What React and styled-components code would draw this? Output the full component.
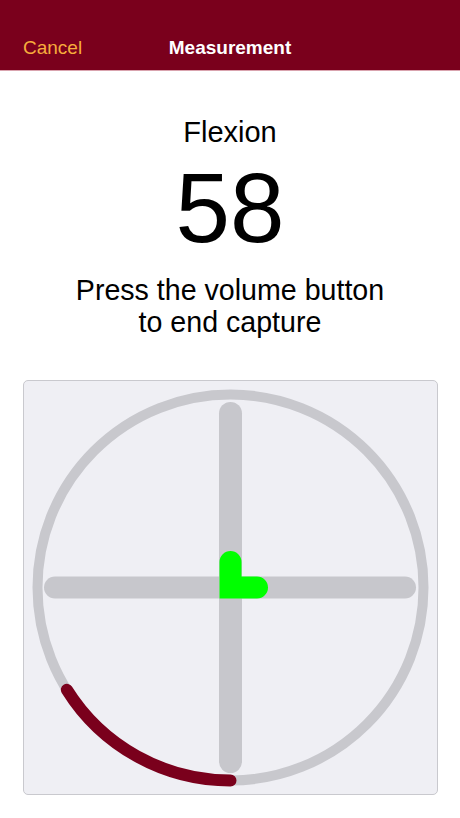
import React from 'react'
import styled, { createGlobalStyle } from 'styled-components'

const GlobalStyle = createGlobalStyle`
  html, body {
    margin: 0;
    padding: 0;
    background: #ffffff;
    font-family: "Liberation Sans", Arial, sans-serif;
  }
`

const Page = styled.div`
  width: 460px;
  min-height: 818px;
  display: flex;
  flex-direction: column;
  align-items: center;
  background: #ffffff;
`

const NavBar = styled.div`
  width: 100%;
  box-sizing: border-box;
  height: 71px;
  padding-top: 25px;
  background: #7a001c;
  border-bottom: 1px solid #d9a3ae;
  display: grid;
  grid-template-columns: 1fr auto 1fr;
  align-items: center;
  padding-left: 23px;
  padding-right: 23px;
`

const NavButton = styled.span`
  color: #f7ad3c;
  font-size: 19px;
  justify-self: start;
`

const NavTitle = styled.span`
  color: #ffffff;
  font-size: 19px;
  font-weight: 700;
`

const Label = styled.div`
  margin-top: 44px;
  font-size: 29px;
  line-height: 34px;
  color: #000;
`

const Value = styled.div`
  margin-top: 10px;
  font-size: 98px;
  line-height: 98px;
  color: #000;
`

const Hint = styled.div`
  margin-top: 17px;
  font-size: 28.6px;
  line-height: 32px;
  text-align: center;
  color: #000;
`

const Panel = styled.div`
  margin-top: 42px;
  width: 415px;
  height: 415px;
  box-sizing: border-box;
  background: #efeff4;
  border: 1px solid #c9c9ce;
  border-radius: 5px;
  display: flex;
  align-items: center;
  justify-content: center;
`

const SIZE = 415
const C = SIZE / 2
const R = 193

function Gauge({ value }) {
  const start = Math.PI / 2
  const end = start + (value * Math.PI) / 180
  const x1 = C + R * Math.cos(start)
  const y1 = C + R * Math.sin(start)
  const x2 = C + R * Math.cos(end)
  const y2 = C + R * Math.sin(end)
  const large = value > 180 ? 1 : 0

  return (
    <svg width={SIZE - 2} height={SIZE - 2} viewBox={`1 1 ${SIZE - 2} ${SIZE - 2}`}>
      <circle cx={C} cy={C} r={R} fill="none" stroke="#c8c8cd" strokeWidth="10" />
      <line x1={C} y1={33.5} x2={C} y2={381.5} stroke="#c7c7cc" strokeWidth="23" strokeLinecap="round" />
      <line x1={32} y1={C} x2={382} y2={C} stroke="#c7c7cc" strokeWidth="22" strokeLinecap="round" />
      <polyline
        points={`${C},182 ${C},${C} 234,${C}`}
        fill="none"
        stroke="#00ff00"
        strokeWidth="22"
        strokeLinecap="round"
        strokeLinejoin="miter"
      />
      <path
        d={`M ${x1} ${y1} A ${R} ${R} 0 ${large} 1 ${x2} ${y2}`}
        fill="none"
        stroke="#7a001c"
        strokeWidth="12"
        strokeLinecap="round"
      />
    </svg>
  )
}

export default function App() {
  const angle = 58
  return (
    <Page>
      <GlobalStyle />
      <NavBar>
        <NavButton>Cancel</NavButton>
        <NavTitle>Measurement</NavTitle>
        <span />
      </NavBar>
      <Label>Flexion</Label>
      <Value>{angle}</Value>
      <Hint>
        Press the volume button
        <br />
        to end capture
      </Hint>
      <Panel>
        <Gauge value={angle} />
      </Panel>
    </Page>
  )
}
